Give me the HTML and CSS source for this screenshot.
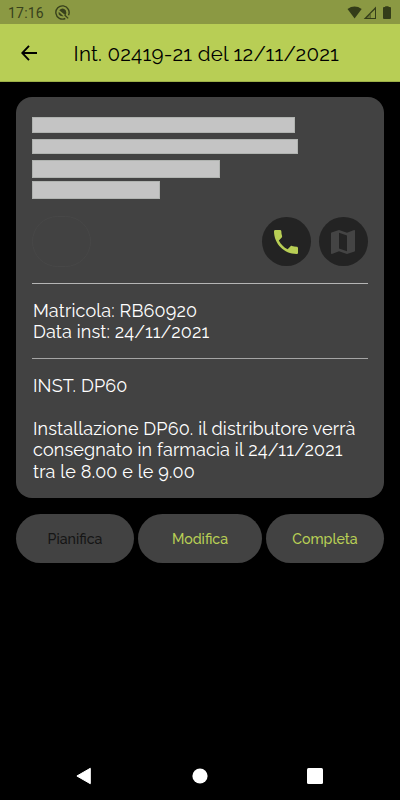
FILE: index.html
```
<!DOCTYPE html>
<html lang="it">
<head>
    <meta charset="UTF-8">
    <meta name="viewport" content="width=device-width, initial-scale=1.0">
    <title>Int. 02419-21</title>
    <link rel="stylesheet" href="styles.css">
</head>
<body>
    <div class="status-bar">
        <span class="clock">17:16</span>
        <svg class="app-icon" width="15" height="15" viewBox="0 0 14 14">
            <path d="M12.6 9.6A6.2 6.2 0 1 0 9.6 12.6" fill="none" stroke="#38411c" stroke-width="1.3"/>
            <path d="M3.9 5Q7 1.8 10 4.8Q11.4 7.5 9.8 9.6Z M3.4 6.4L8 10.4Q4.8 11 3.4 8.6Z" fill="#38411c"/>
            <path d="M9 9.3l3.3 3.2" stroke="#38411c" stroke-width="1.2"/>
        </svg>
        <svg class="system-icons" width="46" height="14" viewBox="0 0 46 14">
            <path d="M.5 3Q7.5-1.9 14.7 3L7.6 12.4Z" fill="#343d19"/>
            <path d="M29 .5V13H16.7Z" fill="#343d19"/>
            <path d="M28 3.5V12H23.5V7.8Z" fill="#8b9943"/>
            <path d="M23 8.6V12H19.6Z" fill="#6a7634"/>
            <path d="M38.2 1.1V.2h3.4v.9H43q1 0 1 1v10q0 1-1 1h-6q-1 0-1-1v-10q0-1 1-1z" fill="#343d19"/>
        </svg>
    </div>

    <header class="app-bar">
        <svg class="back" width="16" height="16" viewBox="0 0 16 16">
            <path d="M16 8H1.5M8 .8L1.2 8L8 15.2" fill="none" stroke="#000" stroke-width="1.9"/>
        </svg>
        <h1>Int. 02419-21 del 12/11/2021</h1>
    </header>

    <main>
        <section class="card">
            <div class="hidden-data">
                <div class="bar bar-name"></div>
                <div class="bar bar-address"></div>
                <div class="bar bar-city"></div>
                <div class="bar bar-phone"></div>
            </div>
            <div class="actions">
                <div class="ghost"></div>
                <button class="round">
                    <svg width="32" height="32" viewBox="0 0 24 24" fill="#b8ce55">
                        <path d="M6.62 10.79c1.44 2.83 3.76 5.14 6.59 6.59l2.2-2.2c.27-.27.67-.36 1.02-.24 1.12.37 2.33.57 3.57.57.55 0 1 .45 1 1V20c0 .55-.45 1-1 1-9.39 0-17-7.61-17-17 0-.55.45-1 1-1h3.5c.55 0 1 .45 1 1 0 1.25.2 2.45.57 3.57.11.35.03.74-.25 1.02l-2.2 2.2z"/>
                    </svg>
                </button>
                <button class="round">
                    <svg width="32" height="32" viewBox="0 0 24 24" fill="#444">
                        <path d="M20.5 3l-.16.03L15 5.1 9 3 3.36 4.9c-.21.07-.36.25-.36.48V20.5c0 .28.22.5.5.5l.16-.03L9 18.9l6 2.1 5.64-1.9c.21-.07.36-.25.36-.48V3.5c0-.28-.22-.5-.5-.5zM15 19l-6-2.11V5l6 2.11V19z"/>
                    </svg>
                </button>
            </div>
            <div class="details">
                <p>Matricola: RB60920</p>
                <p>Data inst: 24/11/2021</p>
            </div>
            <div class="notes">
                <p class="type">INST. DP60</p>
                <p>Installazione DP60. il distributore verrà</p>
                <p>consegnato in farmacia il 24/11/2021</p>
                <p>tra le 8.00 e le 9.00</p>
            </div>
        </section>

        <div class="buttons">
            <button class="pill disabled">Pianifica</button>
            <button class="pill">Modifica</button>
            <button class="pill">Completa</button>
        </div>
    </main>

    <nav class="nav-bar">
        <svg width="16" height="18" viewBox="0 0 16 18"><path d="M14.3 1.3V16.7L.9 9Z" fill="#fff" stroke="#fff" stroke-linejoin="round"/></svg>
        <svg width="16" height="16" viewBox="0 0 16 16"><circle cx="8" cy="8" r="7.6" fill="#fff"/></svg>
        <svg width="16" height="16" viewBox="0 0 16 16"><rect width="16" height="16" rx="1.5" fill="#fff"/></svg>
    </nav>
</body>
</html>
```
FILE: styles.css
```
* {
  box-sizing: border-box;
}

body {
  margin: 0;
  height: 800px;
  display: flex;
  flex-direction: column;
  background-color: #000;
  color: #fff;
  font-family: Raleway, Lato, sans-serif;
  overflow: hidden;
}

h1,
p {
  margin: 0;
  font-weight: 400;
  white-space: nowrap;
}

button {
  border: none;
  padding: 0;
  font-family: inherit;
}

/* Status Bar */
.status-bar {
  height: 24px;
  display: flex;
  align-items: center;
  padding: 1px 7px 0 8px;
  background-color: #8b9943;
}

.clock {
  width: 47px;
  color: #38411c;
  font: 14px Roboto, sans-serif;
  letter-spacing: 0.2px;
}

.system-icons {
  margin-left: auto;
}

/* App Bar */
.app-bar {
  height: 58px;
  display: flex;
  align-items: center;
  padding-left: 21px;
  background-color: #b8ce55;
  border-bottom: 1px solid #9caf48;
  color: #000;
}

.back {
  margin-right: 36.6px;
}

h1 {
  padding-top: 3px;
  font-size: 20.5px;
  letter-spacing: 0.2px;
}

/* Card */
main {
  flex: 1;
  padding: 15px 16px 0;
}

.card {
  height: 401px;
  padding: 20px 16px 0;
  border-radius: 16px;
  background-color: #424242;
}

.hidden-data {
  height: 83px;
}

.bar {
  background-color: #c4c4c4;
  border: 1px solid #b0b3b0;
}

.bar-name {
  width: 263px;
  height: 16px;
  margin-bottom: 6px;
}

.bar-address {
  width: 266px;
  height: 15px;
  margin-bottom: 6px;
}

.bar-city {
  width: 188px;
  height: 18px;
  margin-bottom: 3px;
}

.bar-phone {
  width: 128px;
  height: 18px;
}

.actions {
  height: 84px;
  display: flex;
  align-items: center;
  gap: 8px;
  padding-right: 0.4px;
  border-bottom: 1px solid #b5b5b5;
}

.ghost {
  width: 59px;
  height: 51px;
  margin-right: auto;
  border: 1px solid #474747;
  border-radius: 26px;
}

.round {
  width: 49px;
  height: 49px;
  display: flex;
  align-items: center;
  justify-content: center;
  border-radius: 50%;
  background-color: #232323;
}

.details,
.notes {
  font-size: 18px;
  line-height: 21.4px;
  letter-spacing: 0.15px;
}

.details {
  height: 75px;
  padding: 16px 1px 0;
  border-bottom: 1px solid #a5a5a5;
}

.notes {
  padding: 16px 1px 0;
}

.type {
  margin-bottom: 21.4px;
}

/* Buttons */
.buttons {
  display: grid;
  grid-template-columns: 118px 124px 118px;
  gap: 4px;
  margin-top: 16px;
}

.pill {
  height: 49px;
  border-radius: 25px;
  background-color: #424242;
  color: #b8ce55;
  font-size: 14.2px;
  font-weight: 500;
}

.disabled {
  color: #151515;
}

/* Navigation Bar */
.nav-bar {
  height: 49px;
  display: flex;
  align-items: center;
  justify-content: space-between;
  padding: 0 77px 0 76px;
}
```
